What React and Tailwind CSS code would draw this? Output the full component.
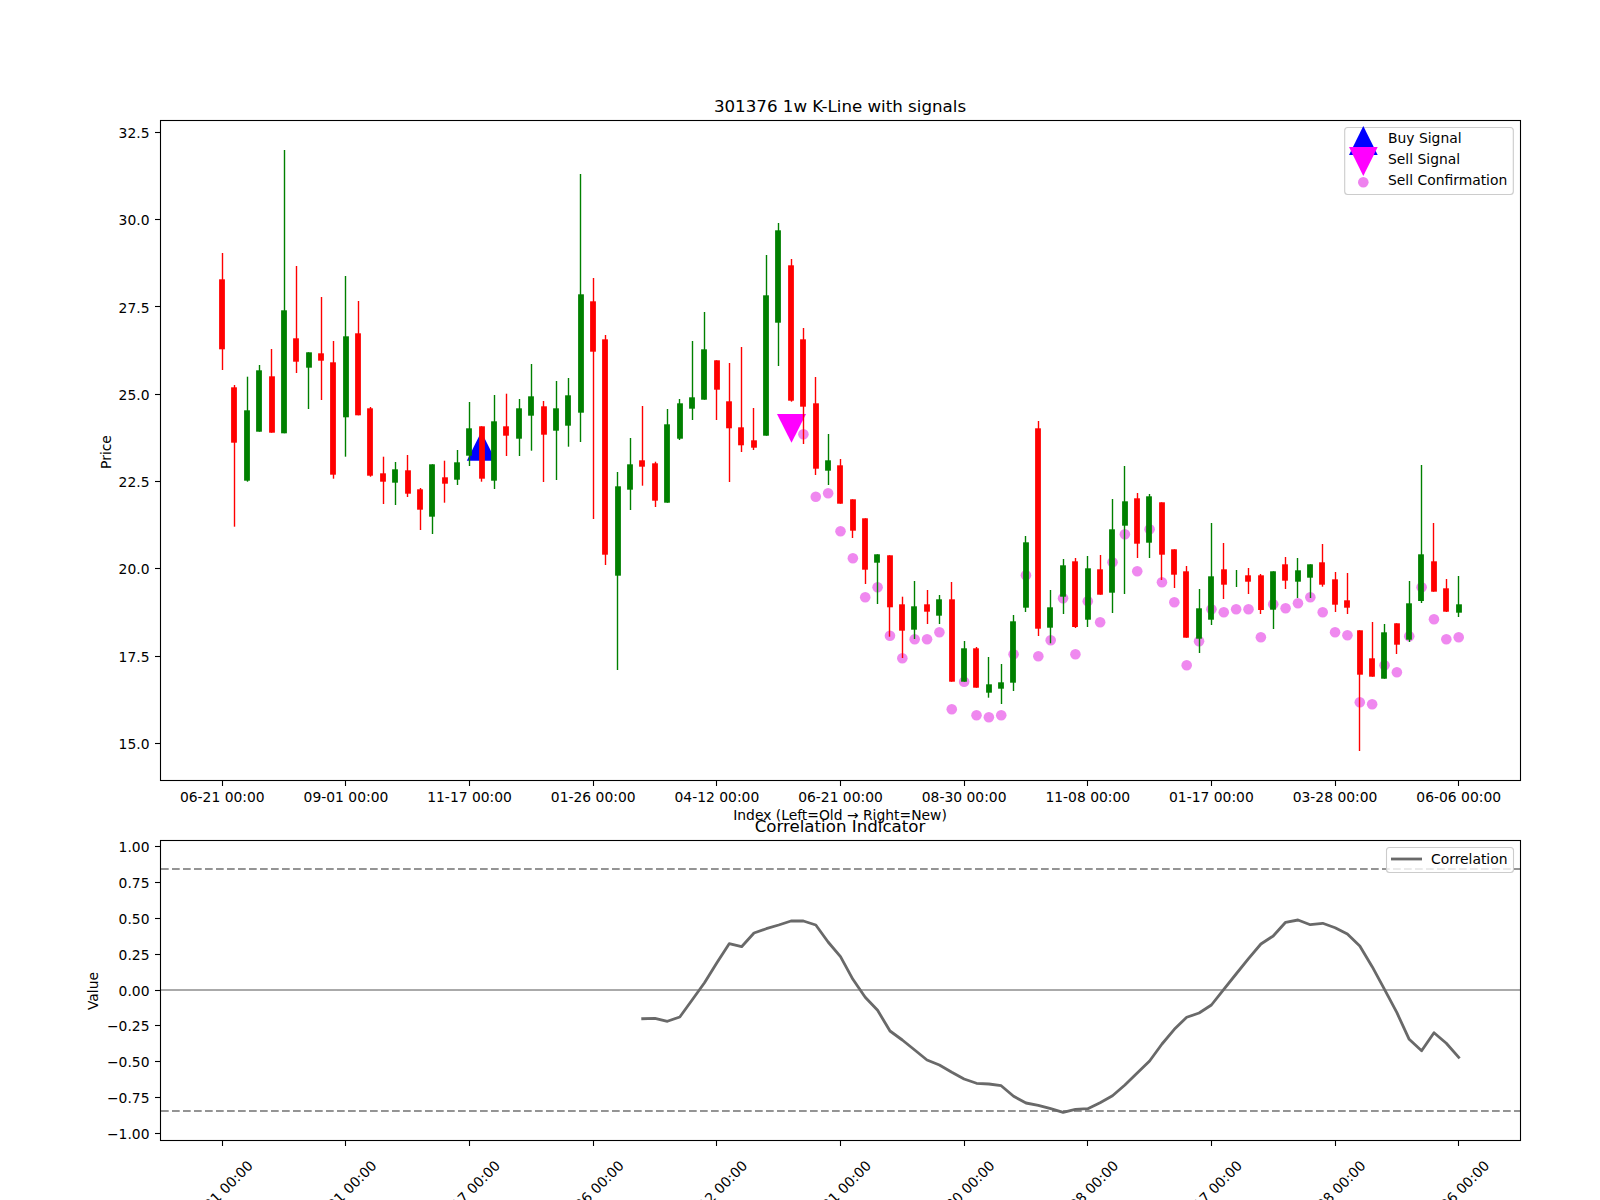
// weekly k-line chart with a correlation panel underneath
const xAt = (i) => 222.3 + 12.364 * i;
const snap = (x) => Math.floor(x) + 0.5;

const xLabels = ['06-21 00:00', '09-01 00:00', '11-17 00:00', '01-26 00:00', '04-12 00:00', '06-21 00:00', '08-30 00:00', '11-08 00:00', '01-17 00:00', '03-28 00:00', '06-06 00:00'];

// [up?, wick top, body top, body bottom, wick bottom] in page pixels
const candles = [
  ['r', 253, 279.3, 349.3, 370], ['r', 385, 387.3, 442.7, 526.7], ['g', 376.7, 410.3, 480.7, 481.7], ['g', 365, 370.3, 431.7, 431.7],
  ['r', 349, 376.3, 432.7, 432.7], ['g', 150, 310.3, 433.3, 433.3], ['r', 266, 338.3, 361.7, 373], ['g', 352.3, 352.3, 367.7, 409],
  ['r', 297, 353.3, 360.7, 400], ['r', 341, 362.3, 474.7, 478.7], ['g', 276, 336.3, 417.3, 456.7], ['r', 301, 333.3, 415.3, 415.3],
  ['r', 407, 408.3, 475.7, 476.7], ['r', 456.7, 473.3, 481.7, 504], ['g', 462, 469.3, 482.7, 505], ['r', 455, 470.3, 493.7, 497],
  ['r', 488, 489.3, 509.7, 530], ['g', 464.3, 464.3, 516.7, 534], ['r', 460.7, 477.3, 483.7, 502.7], ['g', 450, 462.3, 479.7, 485],
  ['g', 402, 428.3, 455.7, 466], ['r', 426.3, 426.3, 478.7, 481.7], ['g', 395, 421.3, 480.7, 489], ['r', 393.7, 426.3, 435.7, 456],
  ['g', 399, 408.3, 438.7, 456], ['g', 364, 396.3, 415.7, 450.7], ['r', 401, 406.3, 434.7, 482], ['g', 381, 408.3, 430.7, 480],
  ['g', 378, 395.3, 425.7, 446.7], ['g', 174, 294.3, 412.7, 442], ['r', 278, 301.3, 351.7, 519], ['r', 335, 339.3, 554.7, 565],
  ['g', 472, 486.3, 575.7, 670], ['g', 438, 464.3, 489.7, 510], ['r', 406, 460.3, 466.7, 485.7], ['r', 461.7, 463.3, 500.7, 507],
  ['g', 409, 424.3, 502.7, 502.7], ['g', 399, 403.3, 438.7, 440], ['g', 341, 397.3, 408.7, 420], ['g', 312, 349.3, 399.7, 399.7],
  ['r', 360.3, 360.3, 389.7, 420], ['r', 363, 401.3, 428.3, 482], ['r', 347, 427.3, 445.3, 452], ['r', 408, 440.3, 447.7, 450],
  ['g', 255, 295.3, 435.7, 435.7], ['g', 223, 230.3, 322.7, 366], ['r', 259, 265.3, 400.7, 401.7], ['r', 328, 339.3, 406.7, 444],
  ['r', 377, 403.3, 468.7, 475], ['g', 434, 460.3, 470.7, 485], ['r', 459, 465.3, 503.7, 503.7], ['r', 499.3, 499.3, 530.7, 538],
  ['r', 518.3, 518.3, 569.7, 584], ['g', 554.3, 554.3, 562.7, 604], ['r', 555.3, 555.3, 607.3, 636.7], ['r', 596.7, 604.3, 630.7, 658],
  ['g', 581, 606.3, 629.7, 639], ['r', 590, 604.3, 611.7, 624], ['g', 595, 599.3, 615.7, 624], ['r', 582, 599.3, 681.7, 681.7],
  ['g', 641, 648.3, 681.7, 681.7], ['r', 647, 648.3, 687.7, 687.7], ['g', 657, 684.3, 692.7, 697.7], ['g', 664, 682.3, 688.7, 704],
  ['g', 615, 621.3, 682.7, 691], ['g', 536, 542.3, 607.7, 612], ['r', 421, 428.3, 628.7, 636], ['g', 590, 607.3, 627.7, 643.3],
  ['g', 559, 565.3, 596.7, 614], ['r', 558, 561.3, 627, 628], ['g', 556, 568.3, 619.7, 627], ['r', 555, 569.3, 594.7, 594.7],
  ['g', 499, 529.3, 592.7, 613], ['g', 466, 501.3, 525.7, 594], ['r', 493, 498.3, 543.7, 558], ['g', 494, 496.3, 542.7, 558],
  ['r', 502.3, 502.3, 554.7, 580], ['r', 549.3, 549.3, 574.7, 588], ['r', 566, 571.3, 637.7, 637.7], ['g', 589, 608.3, 638.7, 653],
  ['g', 523, 576.3, 619.7, 625], ['r', 543, 569.3, 584.7, 599], ['g', 570, 578, 578, 587], ['r', 568, 575.3, 581.7, 594],
  ['r', 574, 575.3, 610, 614], ['g', 571.3, 571.3, 609.7, 629], ['r', 557, 564.3, 580.7, 589], ['g', 558, 570.3, 581.7, 598],
  ['g', 564.3, 564.3, 577.7, 598], ['r', 544, 562.3, 584.7, 586.7], ['r', 572, 579.3, 604.7, 612], ['r', 573, 600.3, 607.7, 614],
  ['r', 630.3, 630.3, 674.7, 751], ['r', 622, 658.3, 676.7, 676.7], ['g', 624, 632.3, 678.7, 678.7], ['r', 623.3, 623.3, 644.7, 654],
  ['g', 581, 603.3, 639.7, 642], ['g', 465, 554.3, 601, 603], ['r', 523, 561.3, 591.7, 591.7], ['r', 579, 588.3, 611.7, 612],
  ['g', 576, 604.3, 612.7, 617],
];

// sell confirmation dots, one per candle from index 47 on
const confirmY = [
  434.3, 496.7, 493.3, 531.3, 558.3, 597.3, 587.3, 635.7, 658.3, 639.3, 639.3, 632.3, 709.3, 681.7, 715.3, 717.3, 715.3, 654.3, 575.3, 656.3,
  640.3, 598.3, 654.3, 601.3, 622.3, 562.3, 534.3, 571.3, 529.3, 582.3, 602.3, 665.3, 641.3, 609.3, 612.3, 609.3, 609.3, 637.3, 604.3, 608.3,
  603.3, 597.3, 612.3, 632.3, 635.3, 702.3, 704.3, 665.3, 672.3, 636.3, 587.3, 619.3, 639.3, 637.3,
];

// correlation line, one point per candle from index 34 on
const corrY = [
  1018.7, 1018.3, 1021.3, 1017, 1000, 982.7, 962.7, 943.7, 946.7, 933, 928.7, 925, 921, 921, 925, 942, 956.7, 979.3, 997.3, 1010.3,
  1031, 1040, 1050, 1060, 1065, 1072.3, 1079, 1083.3, 1084, 1085.7, 1096.3, 1103, 1105.3, 1108.7, 1112.3, 1109.3, 1108.7, 1102.7, 1095.7, 1085,
  1073, 1061, 1044, 1029.3, 1017.3, 1013, 1005, 989.3, 974, 958.7, 944, 936, 922.3, 920, 924.7, 923.3, 927.7, 934, 946, 966.7, 989.3, 1012.7,
  1039.3, 1050.7, 1032.7, 1043.3, 1057.3,
];

function XAxis({ y, rotated }) {
  return xLabels.map((label, n) => {
    const x = xAt(n * 10);
    return (
      <g key={n}>
        <line x1={snap(x)} x2={snap(x)} y1={y} y2={y + 5} stroke="#000" strokeWidth="1.1" />
        {rotated ? (
          <text x={x - 2} y={y + 52} textAnchor="middle" dominantBaseline="central" transform={`rotate(-45 ${x - 2} ${y + 52})`} className="text-[13.89px]">{label}</text>
        ) : (
          <text x={x} y={y + 20.5} textAnchor="middle" className="text-[13.89px]">{label}</text>
        )}
      </g>
    );
  });
}

function YAxis({ ticks }) {
  return ticks.map(([label, y]) => (
    <g key={label}>
      <line x1="155" x2="160" y1={Math.floor(y) + 0.5} y2={Math.floor(y) + 0.5} stroke="#000" strokeWidth="1.1" />
      <text x="149.5" y={y + 5.6} textAnchor="end" className="text-[13.89px]">{label}</text>
    </g>
  ));
}

function PriceAxes() {
  const ticks = ['15.0', '17.5', '20.0', '22.5', '25.0', '27.5', '30.0', '32.5'].map((t, n) => [t, 743.5 - 87.31 * n]);
  return (
    <g>
      <text x="840" y="112" textAnchor="middle" className="text-[16.67px]">301376 1w K-Line with signals</text>

      {/* markers sit under the candles */}
      <polygon points="481.3,431.7 466.8,460.7 495.8,460.7" fill="#0000ff" />
      <polygon points="777,414 806,414 791.5,442.7" fill="#ff00ff" />
      {confirmY.map((y, n) => (
        <circle key={n} cx={xAt(n + 47)} cy={y} r="5.3" fill="#ee82ee" fillOpacity="0.95" />
      ))}

      {candles.map(([c, wickTop, top, bottom, wickBottom], i) => {
        const color = c === 'r' ? '#ff0000' : '#008000';
        const x = xAt(i);
        return (
          <g key={i}>
            <line x1={snap(x)} x2={snap(x)} y1={wickTop} y2={wickBottom} stroke={color} strokeWidth="1.4" />
            {bottom > top && <rect x={Math.round(x - 3.2) + 0.1} y={top} width="5.8" height={bottom - top} fill={color} />}
          </g>
        );
      })}

      <rect x="160.5" y="120.5" width="1360" height="660" fill="none" stroke="#000" strokeWidth="1.1" />
      <YAxis ticks={ticks} />
      <XAxis y={781} />

      <text x="111" y="452" textAnchor="middle" transform="rotate(-90 111 452)" className="text-[13.89px]">Price</text>
      <text x="840" y="820" textAnchor="middle" className="text-[13.89px]">Index (Left=Old → Right=New)</text>

      {/* legend */}
      <rect x="1344.7" y="127.5" width="168.6" height="67" rx="3" fill="#fff" fillOpacity="0.8" stroke="#ccc" strokeWidth="1.1" />
      <polygon points="1363.3,126 1349,155 1377.7,155" fill="#0000ff" />
      <polygon points="1349,147 1377.7,147 1363.3,176" fill="#ff00ff" />
      <circle cx="1363.3" cy="182.3" r="5.3" fill="#ee82ee" />
      <text x="1388" y="143" className="text-[13.89px]">Buy Signal</text>
      <text x="1388" y="164" className="text-[13.89px]">Sell Signal</text>
      <text x="1388" y="185" className="text-[13.89px]">Sell Confirmation</text>
    </g>
  );
}

function CorrelationAxes() {
  const ticks = ['1.00', '0.75', '0.50', '0.25', '0.00', '−0.25', '−0.50', '−0.75', '−1.00'].map((t, n) => [t, 846.7 + 35.83 * n]);
  const points = corrY.map((y, n) => `${xAt(n + 34).toFixed(1)},${y}`).join(' ');
  return (
    <g>
      <line x1="161" x2="1520" y1="869" y2="869" stroke="#949494" strokeWidth="2.1" strokeDasharray="7.7 3.3" />
      <line x1="161" x2="1520" y1="1111" y2="1111" stroke="#949494" strokeWidth="2.1" strokeDasharray="7.7 3.3" />
      <line x1="161" x2="1520" y1="990" y2="990" stroke="#aaaaaa" strokeWidth="2" />
      <polyline points={points} fill="none" stroke="#696969" strokeWidth="2.8" strokeLinejoin="round" strokeLinecap="square" />

      <rect x="160.5" y="840.5" width="1360" height="300" fill="none" stroke="#000" strokeWidth="1.1" />
      <YAxis ticks={ticks} />
      <XAxis y={1141} rotated />

      <text x="840" y="832" textAnchor="middle" className="text-[16.67px]">Correlation Indicator</text>
      <text x="98" y="991" textAnchor="middle" transform="rotate(-90 98 991)" className="text-[13.89px]">Value</text>

      {/* legend */}
      <rect x="1386.5" y="847.5" width="127" height="25" rx="3" fill="#fff" fillOpacity="0.8" stroke="#ccc" strokeWidth="1.1" />
      <line x1="1391" x2="1422" y1="859" y2="859" stroke="#696969" strokeWidth="2.8" />
      <text x="1431" y="864" className="text-[13.89px]">Correlation</text>
    </g>
  );
}

export default function App() {
  return (
    <div className="w-[1600px] h-[1200px] bg-white overflow-hidden font-['DejaVu_Sans',sans-serif] text-black">
      <svg width="1600" height="1200" viewBox="0 0 1600 1200" className="block">
        <PriceAxes />
        <CorrelationAxes />
      </svg>
    </div>
  );
}
